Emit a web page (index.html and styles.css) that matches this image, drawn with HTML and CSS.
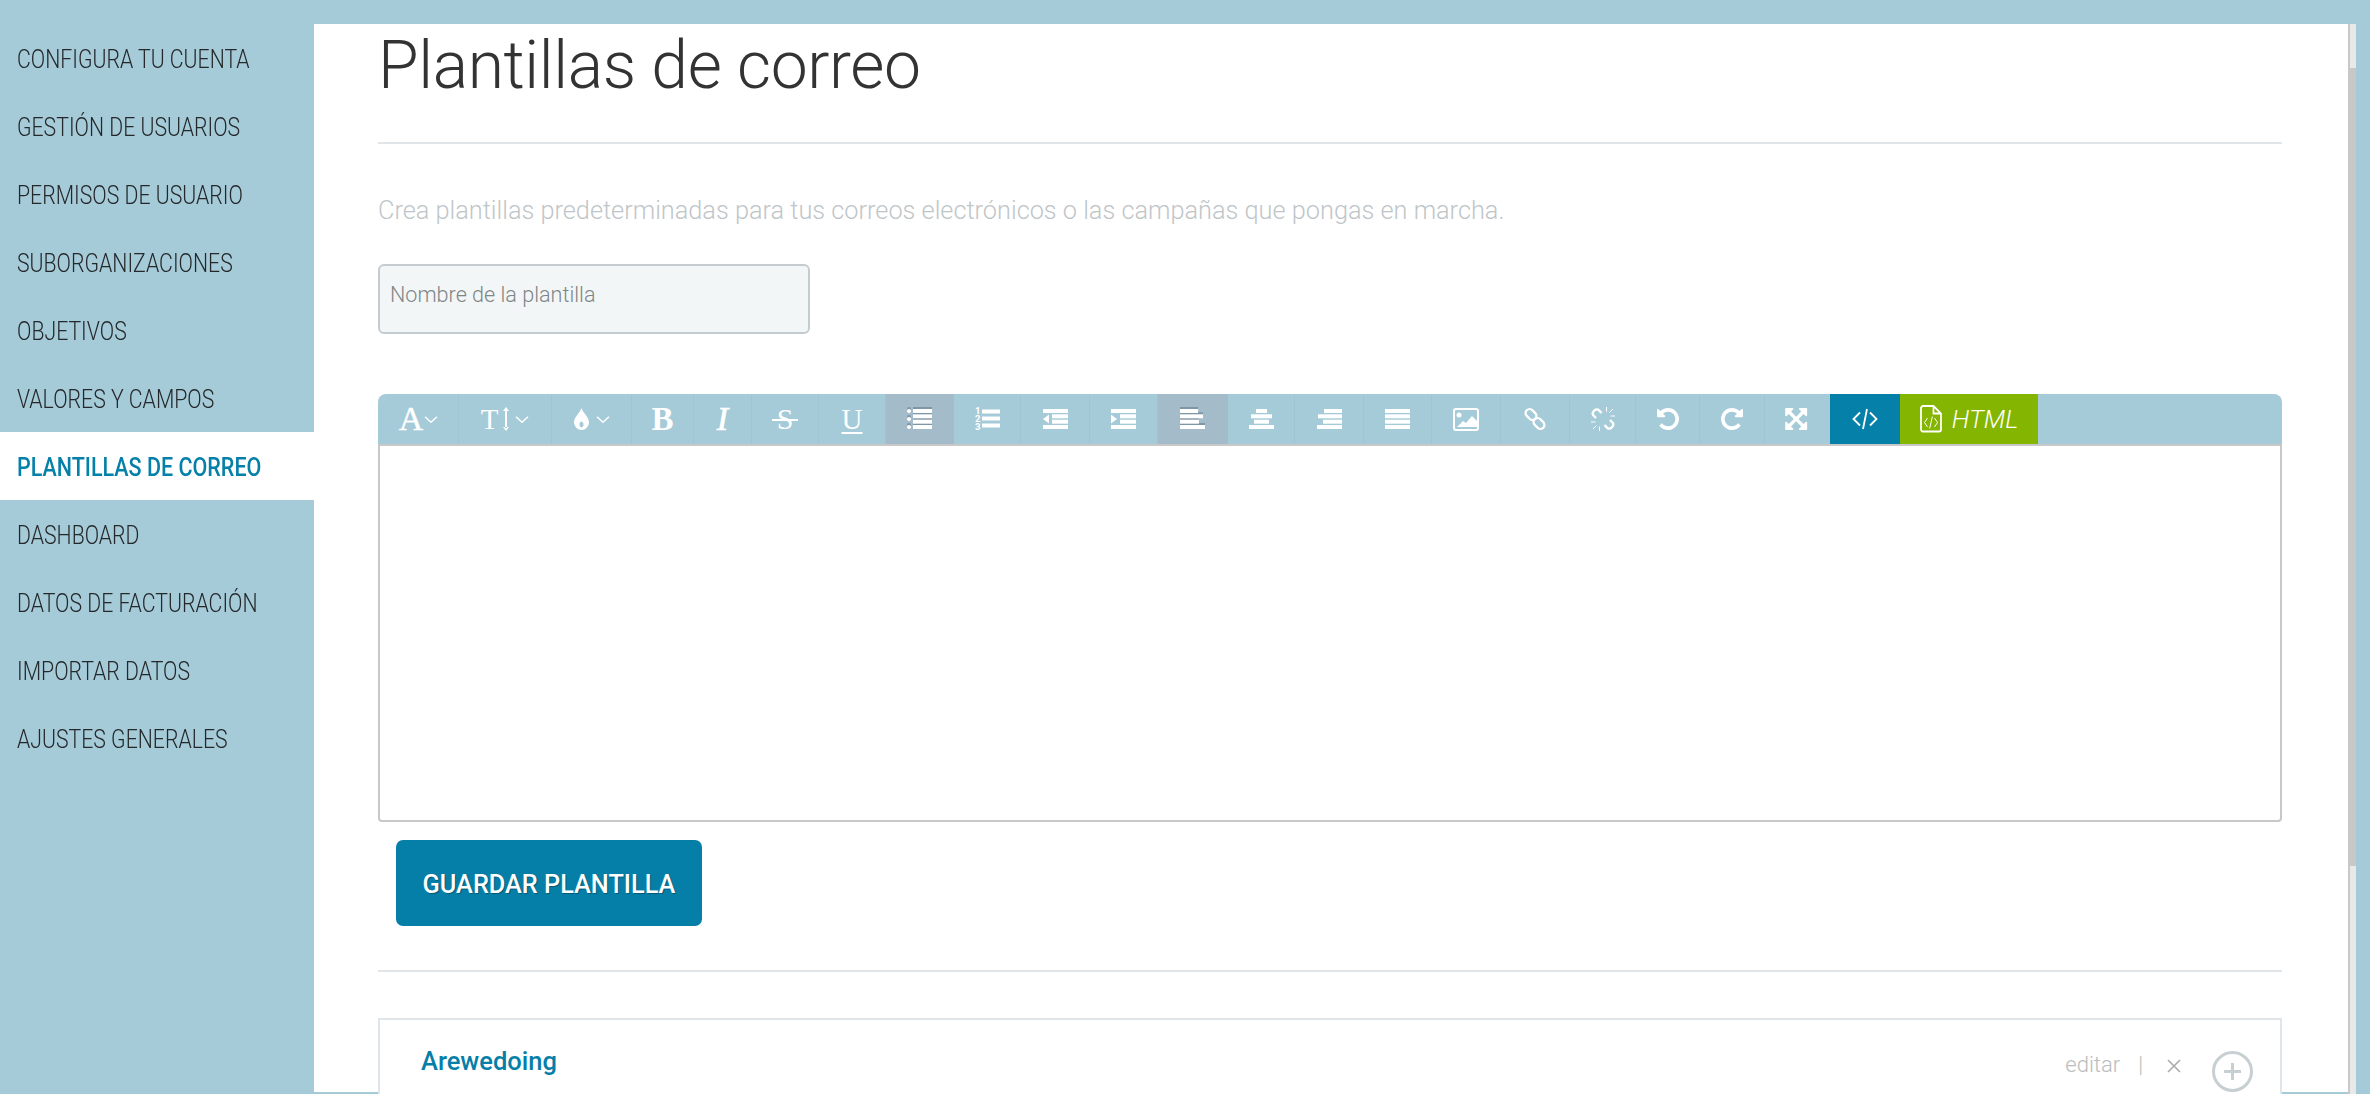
FILE: index.html
```html
<!DOCTYPE html>
<html lang="es">
<head>
<meta charset="utf-8">
<title>Plantillas de correo</title>
<link rel="stylesheet" href="styles.css">
</head>
<body>
<div class="app">
  <nav class="sidebar">
    <a class="nav-item"><span class="nav-label">CONFIGURA TU CUENTA</span></a>
    <a class="nav-item"><span class="nav-label">GESTIÓN DE USUARIOS</span></a>
    <a class="nav-item"><span class="nav-label">PERMISOS DE USUARIO</span></a>
    <a class="nav-item"><span class="nav-label">SUBORGANIZACIONES</span></a>
    <a class="nav-item"><span class="nav-label">OBJETIVOS</span></a>
    <a class="nav-item"><span class="nav-label">VALORES Y CAMPOS</span></a>
    <a class="nav-item active"><span class="nav-label">PLANTILLAS DE CORREO</span></a>
    <a class="nav-item"><span class="nav-label">DASHBOARD</span></a>
    <a class="nav-item"><span class="nav-label">DATOS DE FACTURACIÓN</span></a>
    <a class="nav-item"><span class="nav-label">IMPORTAR DATOS</span></a>
    <a class="nav-item"><span class="nav-label">AJUSTES GENERALES</span></a>
  </nav>
  <main class="panel">
    <h1 class="title">Plantillas de correo</h1>
    <hr class="rule">
    <p class="lead">Crea plantillas predeterminadas para tus correos electrónicos o las campañas que pongas en marcha.</p>
    <div class="name-field">Nombre de la plantilla</div>
    <div class="toolbar">
      <div class="tool w81"><span class="glyph glyph-a">A</span><svg class="chev" viewBox="0 0 14 7"><path d="M1 .8l6 5.4 6-5.4"/></svg></div>
      <div class="tool w93"><span class="glyph glyph-t">T</span><svg class="updown" viewBox="0 0 6 24"><path d="M3 0l3 4H0zM3 24l3-4H0zM2 3h2v18H2z"/></svg><svg class="chev chev-t" viewBox="0 0 14 7"><path d="M1 .8l6 5.400 6-5.400"/></svg></div>
      <div class="tool w80"><svg class="drop" viewBox="0 0 15 22"><path fill-rule="evenodd" d="M7.500 0C9 5 15 9 15 14.500a7.500 7.500 0 0 1-15 0C0 9 6 5 7.500 0zM7.500 13.500a2 3 0 1 0 .01 0z"/></svg><svg class="chev chev-d" viewBox="0 0 14 7"><path d="M1 .8l6 5.400 6-5.400"/></svg></div>
      <div class="tool w62"><span class="glyph glyph-b">B</span></div>
      <div class="tool w58"><span class="glyph glyph-i">I</span></div>
      <div class="tool w67"><span class="glyph glyph-s">S</span></div>
      <div class="tool w67"><span class="glyph glyph-u">U</span></div>
      <div class="tool w68 on"><svg class="ico" viewBox="0 0 25 20"><circle cx="2" cy="2" r="2"/><circle cx="2" cy="10" r="2"/><circle cx="2" cy="18" r="2"/><rect x="6" width="19" height="4"/><rect x="6" y="5.300" width="19" height="4"/><rect x="6" y="10.700" width="19" height="4"/><rect x="6" y="16" width="19" height="4"/></svg></div>
      <div class="tool w67"><svg class="ico ico-ol" viewBox="0 0 25 24"><text class="ol-num" x="0" y="7">1</text><text class="ol-num" x="0" y="15">2</text><text class="ol-num" x="0" y="23">3</text><rect x="7" y="2.500" width="18" height="4"/><rect x="7" y="9.500" width="18" height="4"/><rect x="7" y="16.500" width="18" height="4"/></svg></div>
      <div class="tool w69"><svg class="ico" viewBox="0 0 25 20"><rect width="25" height="4"/><rect x="9" y="5.300" width="16" height="4"/><rect x="9" y="10.700" width="16" height="4"/><rect y="16" width="25" height="4"/><path d="M6 5.500v9L0 10z"/></svg></div>
      <div class="tool w68"><svg class="ico" viewBox="0 0 25 20"><rect width="25" height="4"/><rect x="9" y="5.300" width="16" height="4"/><rect x="9" y="10.700" width="16" height="4"/><rect y="16" width="25" height="4"/><path d="M0 5.500v9L6 10z"/></svg></div>
      <div class="tool w70 on"><svg class="ico" viewBox="0 0 25 20"><rect width="18" height="4"/><rect y="5.300" width="23" height="4"/><rect y="10.700" width="19" height="4"/><rect y="16" width="25" height="4"/></svg></div>
      <div class="tool w67"><svg class="ico" viewBox="0 0 25 20"><rect x="7" width="11" height="4"/><rect x="2" y="5.300" width="21" height="4"/><rect x="5" y="10.700" width="15" height="4"/><rect y="16" width="25" height="4"/></svg></div>
      <div class="tool w69"><svg class="ico" viewBox="0 0 25 20"><rect x="7" width="18" height="4"/><rect x="1" y="5.300" width="24" height="4"/><rect x="6" y="10.700" width="19" height="4"/><rect y="16" width="25" height="4"/></svg></div>
      <div class="tool w68"><svg class="ico" viewBox="0 0 25 20"><rect width="25" height="4"/><rect y="5.300" width="25" height="4"/><rect y="10.700" width="25" height="4"/><rect y="16" width="25" height="4"/></svg></div>
      <div class="tool w69"><svg class="ico ico-img" viewBox="0 0 26 23"><rect class="line" x="1" y="1" width="24" height="21" rx="2"/><circle cx="6" cy="7" r="2.500"/><path d="M4 19l6-6 3 2 6-7 5 5v6z"/></svg></div>
      <div class="tool w69"><svg class="ico ico-link" viewBox="0 0 24 24"><g class="line line-3"><rect x="2" y="3.500" width="12" height="8" rx="4" transform="rotate(45 8 7.500)"/><rect x="10" y="12.500" width="12" height="8" rx="4" transform="rotate(45 16 16.500)"/></g></svg></div>
      <div class="tool w66"><svg class="ico ico-link" viewBox="0 0 24 24"><g class="line line-3"><path d="M5 11L2.500 8.500a2.800 2.800 0 0 1 0-4L3.800 3.200a2.800 2.800 0 0 1 4 0L10.500 6"/><path d="M19 13l2.500 2.500a2.800 2.800 0 0 1 0 4l-1.300 1.300a2.800 2.800 0 0 1-4 0L13.500 18"/></g><g class="line line-1"><path d="M15.500 0v4.500M18.500 5.500l3.500-3.500M19.500 9H24M8.500 24v-4.500M5.500 18.500L2 22M4.500 15H0"/></g></svg></div>
      <div class="tool w64"><svg class="ico ico-arc" viewBox="128 128 1536 1536"><path d="M1664 896q0 156-61 298t-164 245-245 164-298 61q-172 0-327-72.500t-264-204.500q-7-10-6.500-22.500t8.500-20.500l137-138q10-9 25-9 16 2 23 12 73 95 179 147t225 52q104 0 198.500-40.500t163.500-109.500 109.500-163.500 40.500-198.500-40.500-198.500-109.500-163.500-163.500-109.500-198.500-40.500q-98 0-188 35.500t-160 101.500l137 138q31 30 14 69-17 40-59 40h-448q-26 0-45-19t-19-45v-448q0-42 40-59 39-17 69 14l130 129q107-101 244.500-156.500t284.500-55.500q156 0 298 61t245 164 164 245 61 298z"/></svg></div>
      <div class="tool w65"><svg class="ico ico-arc flip" viewBox="128 128 1536 1536"><path d="M1664 896q0 156-61 298t-164 245-245 164-298 61q-172 0-327-72.500t-264-204.500q-7-10-6.500-22.500t8.500-20.500l137-138q10-9 25-9 16 2 23 12 73 95 179 147t225 52q104 0 198.500-40.500t163.500-109.500 109.500-163.500 40.500-198.500-40.500-198.500-109.500-163.500-163.500-109.500-198.500-40.500q-98 0-188 35.500t-160 101.500l137 138q31 30 14 69-17 40-59 40h-448q-26 0-45-19t-19-45v-448q0-42 40-59 39-17 69 14l130 129q107-101 244.500-156.500t284.500-55.500q156 0 298 61t245 164 164 245 61 298z"/></svg></div>
      <div class="tool w65 last"><svg class="ico ico-full" viewBox="128 128 1536 1536"><path d="M1283 541l-355 355 355 355 144-144q29-31 70-14 39 17 39 59v448q0 26-19 45t-45 19h-448q-42 0-59-40-17-39 14-69l144-144-355-355-355 355 144 144q31 30 14 69-17 40-59 40h-448q-26 0-45-19t-19-45v-448q0-42 40-59 39-17 69 14l144 144 355-355-355-355-144 144q-19 19-45 19-12 0-24-5-40-17-40-59v-448q0-26 19-45t45-19h448q42 0 59 40 17 39-14 69l-144 144 355 355 355-355-144-144q-31-30-14-69 17-40 59-40h448q26 0 45 19t19 45v448q0 42-39 59-13 5-25 5-26 0-45-19z"/></svg></div>
      <div class="tool w70 code"><svg class="ico ico-code" viewBox="0 0 26 22"><g class="line line-2"><path d="M8 4.500L1.500 11 8 17.500M18 4.500L24.500 11 18 17.500M15 1l-4 20"/></g></svg></div>
      <div class="tool html"><svg class="ico-file" viewBox="0 0 22 28"><g class="line line-2"><path d="M2.500 1h11L21 8.500v16a2 2 0 0 1-2 2H3a2 2 0 0 1-2-2v-22zM13.500 1v7.500H21"/></g><g class="line line-1"><path d="M7.500 13L4.500 17.500l3 4.500M14.500 13l3 4.500-3 4.500M12.300 11.500l-2.600 12"/></g></svg><span class="html-label">HTML</span></div>
    </div>
    <div class="editor"></div>
    <button class="save">GUARDAR PLANTILLA</button>
    <hr class="rule rule-low">
    <section class="card">
      <h2 class="card-name">Arewedoing</h2>
      <div class="card-actions">
        <span class="edit">editar</span>
        <span class="bar">|</span>
        <svg class="close" viewBox="0 0 14 14"><path d="M1 1l12 12M13 1L1 13"/></svg>
        <svg class="plus" viewBox="0 0 41 41"><circle cx="20.500" cy="20.500" r="19"/><path d="M20.500 12v17M12 20.500h17"/></svg>
      </div>
    </section>
  </main>
  <div class="scrollbar">
    <div class="thumb thumb-top"></div>
    <div class="track"></div>
    <div class="thumb thumb-bottom"></div>
  </div>
</div>
</body>
</html>
```
FILE: styles.css
```css
* { box-sizing: border-box; }
html, body { margin: 0; height: 100%; }
body {
  background: #a5cad8;
  overflow: hidden;
  font-family: Roboto, "Noto Sans", sans-serif;
  color: #333;
}
.app {
  display: flex;
  height: 1094px;
  padding-top: 24px;
}
.sidebar {
  width: 314px;
  flex: none;
  display: flex;
  flex-direction: column;
}
.nav-item {
  height: 68px;
  flex: none;
  display: flex;
  align-items: center;
  padding: 2px 0 0 17px;
  font-size: 25px;
  font-weight: 300;
  color: #24282a;
  white-space: nowrap;
}
.nav-label {
  display: inline-block;
  transform: scaleX(.85);
  transform-origin: left center;
}
.nav-item.active {
  background: #fff;
  color: #0580a8;
  font-weight: 500;
}
.nav-item.active .nav-label { transform: scaleX(.86); }
.panel {
  width: 2034px;
  height: 1068px;
  flex: none;
  background: #fff;
  padding: 0 66px 0 64px;
}
.title {
  margin: 0;
  height: 118px;
  font-size: 66px;
  line-height: 84px;
  letter-spacing: -.4px;
  font-weight: 300;
  color: #333;
}
.rule {
  border: 0;
  height: 2px;
  margin: 0;
  background: #dfe5e8;
}
.lead {
  margin: 0;
  padding-top: 51px;
  height: 120px;
  font-size: 25.300px;
  line-height: 32px;
  font-weight: 300;
  color: #bfc6c9;
}
.name-field {
  width: 432px;
  height: 70px;
  border: 2px solid #c5cccf;
  border-radius: 6px;
  background: #f3f6f7;
  padding: 15px 10px;
  font-size: 21.600px;
  line-height: 28px;
  font-weight: 300;
  color: #808688;
}
.toolbar {
  margin-top: 60px;
  height: 50px;
  display: flex;
  background: #a5cad8;
  border-radius: 8px 8px 0 0;
  overflow: hidden;
}
.tool {
  height: 50px;
  flex: none;
  display: flex;
  align-items: center;
  justify-content: center;
  border-right: 1px solid #a0c5d2;
  color: #fff;
  fill: #fff;
}
.tool.last { border-right: 0; }
.w58 { width: 58px; }
.w62 { width: 62px; }
.w64 { width: 64px; }
.w65 { width: 65px; }
.w66 { width: 66px; }
.w67 { width: 67px; }
.w68 { width: 68px; }
.w69 { width: 69px; }
.w70 { width: 70px; }
.w80 { width: 80px; }
.w81 { width: 81px; }
.w93 { width: 93px; }
.tool.on { background: #a4bcca; border-right-color: #a4bcca; }
.tool.on .ico { filter: drop-shadow(0 -2px 0 #7d97a6); }
.glyph {
  font-family: "Liberation Serif", serif;
  line-height: 1;
}
.glyph-a { font-size: 34px; margin-left: 1px; -webkit-text-stroke: .4px #fff; }
.glyph-t { font-size: 29px; }
.glyph-b { font-size: 33px; font-weight: 700; }
.glyph-i { font-size: 34px; font-style: italic; -webkit-text-stroke: .7px #fff; }
.glyph-s { position: relative; font-size: 30px; }
.glyph-s::after {
  content: "";
  position: absolute;
  left: -5px;
  right: -5px;
  top: 15px;
  height: 2px;
  background: #fff;
}
.glyph-u { font-size: 29px; text-decoration: underline; text-decoration-thickness: 2px; text-underline-offset: 3px; }
.chev {
  width: 14px;
  height: 7px;
  margin-left: 1px;
  fill: none;
  stroke: #fff;
  stroke-width: 1.5;
}
.chev-t { margin-left: 6px; }
.chev-d { margin-left: 7px; }
.updown { width: 6px; height: 24px; margin-left: 5px; }
.drop { width: 15px; height: 22px; }
.ico { width: 25px; height: 20px; overflow: visible; }
.ico-ol { height: 24px; }
.ico-img { height: 23px; width: 26px; }
.ico-link { width: 24px; height: 24px; }
.ico-arc { width: 22px; height: 22px; }
.ico-full { width: 22px; height: 22px; }
.flip { transform: scaleX(-1); }
.ol-num { font-family: Roboto, sans-serif; font-size: 9.500px; font-weight: 700; }
.line { fill: none; stroke: #fff; stroke-width: 2; }
.line-1 { stroke-width: 1; }
.line-2 { stroke-width: 1.8; }
.line-3 { stroke-width: 2.4; }
.ico-code { width: 26px; height: 22px; }
.code { background: #0580a8; border-right: 0; }
.html {
  width: 138px;
  background: #84b500;
  border-right: 0;
  gap: 10px;
}
.ico-file { width: 22px; height: 28px; }
.html-label {
  font-size: 25.500px;
  font-weight: 300;
  font-style: italic;
}
.editor {
  height: 378px;
  border: 2px solid #c8c8c8;
  border-radius: 0 0 4px 4px;
}
.save {
  display: block;
  margin: 18px 0 0 18px;
  width: 306px;
  height: 86px;
  border: 0;
  border-radius: 7px;
  padding-top: 3px;
  background: #067fa8;
  color: #fff;
  font-family: Roboto, sans-serif;
  font-size: 25.300px;
  font-weight: 500;
  text-shadow: 1px 1px 1px rgba(0, 0, 0, .3);
}
.rule-low { margin-top: 44px; }
.card {
  margin-top: 46px;
  height: 120px;
  border: 2px solid #dfe5e8;
  background: #fff;
  display: flex;
  align-items: flex-start;
  justify-content: space-between;
  padding: 25px 27px 0 41px;
}
.card-name {
  margin: 0;
  font-size: 25.500px;
  line-height: 32px;
  font-weight: 500;
  color: #067fa8;
}
.card-actions {
  display: flex;
  align-items: center;
  margin-top: 3px;
  height: 32px;
}
.edit { font-size: 22px; font-weight: 300; color: #b9bdbe; }
.bar { margin-left: 18px; font-size: 22px; font-weight: 300; color: #b9bdbe; }
.close { width: 14px; height: 14px; margin-left: 24px; margin-top: 3px; stroke: #a9abac; stroke-width: 1.6; fill: none; }
.plus { width: 41px; height: 41px; margin-left: 31px; fill: none; stroke: #c7cfd2; stroke-width: 3; margin-top: 15px; }
.scrollbar {
  width: 8px;
  flex: none;
  display: flex;
  flex-direction: column;
  background: #c8c8c8;
}
.thumb { margin-left: 2px; background: #e9e9e9; }
.thumb-top { height: 44px; }
.track { height: 798px; }
.thumb-bottom { flex: 1; }
```
